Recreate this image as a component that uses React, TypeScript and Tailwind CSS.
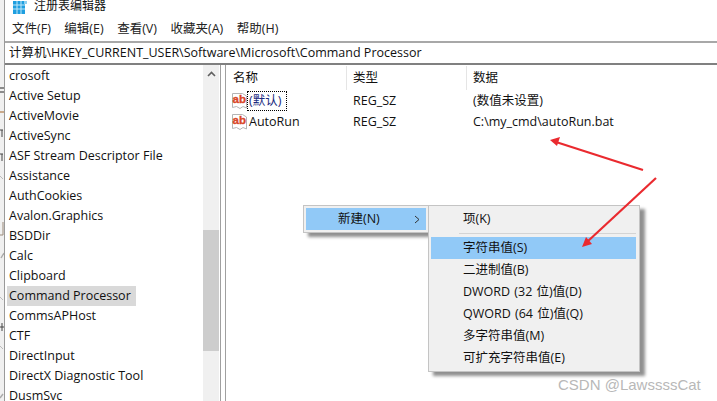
const font = { fontFamily: '"Open Sans", "Noto Sans CJK SC", sans-serif' };

const treeItems = [
  "crosoft", "Active Setup", "ActiveMovie", "ActiveSync", "ASF Stream Descriptor File", "Assistance",
  "AuthCookies", "Avalon.Graphics", "BSDDir", "Calc", "Clipboard", "Command Processor", "CommsAPHost",
  "CTF", "DirectInput", "DirectX Diagnostic Tool", "DusmSvc",
];

const menuItems = ["文件(F)", "编辑(E)", "查看(V)", "收藏夹(A)", "帮助(H)"];
const subItems = ["字符串值(S)", "二进制值(B)", "DWORD (32 位)值(D)", "QWORD (64 位)值(Q)", "多字符串值(M)", "可扩充字符串值(E)"];

function AbIcon() {
  return (
    <svg width="16" height="16" viewBox="0 0 16 16" className="shrink-0">
      <path d="M1.5 0.5 L11.5 0.5 L15.5 3 L15.5 15 L12 13.5 L9 15.5 L5.5 13.5 L1.5 14.5 Z" fill="#fff" stroke="#b4b4b4" />
      <text x="1.5" y="10" fontSize="11.5" fontWeight="700" fill="#d9482a" stroke="#d9482a" strokeWidth="0.35" fontFamily="Liberation Sans, sans-serif">ab</text>
    </svg>
  );
}

function AppIcon() {
  return (
    <svg width="14" height="13" viewBox="0 0 14 13">
      <rect x="0" y="0" width="12" height="13" fill="#1f9fe0" />
      <path d="M4 0V13M8 0V13M0 4H12M0 8H12" stroke="#bfe6f8" strokeWidth="1" />
      <path d="M11 0H14V3H11Z" fill="#8fd0ef" />
    </svg>
  );
}

function Sliver() {
  return (
    <svg width="4" height="401" viewBox="0 0 4 401" className="block">
      <path d="M0 88H4M0 92H4" stroke="#6a6a6a" strokeWidth="1.4" />
      <path d="M0 112H4" stroke="#c9a98a" strokeWidth="2" />
      <path d="M0 130H3M2 130V137" stroke="#444" strokeWidth="1" />
      <path d="M0 154H3M2 154V161" stroke="#444" strokeWidth="1" />
      <path d="M0 176L3 179" stroke="#bbb" strokeWidth="1" />
      <path d="M3 222V235H0" stroke="#9a8a7a" strokeWidth="1" fill="none" />
      <path d="M1 258L4 253" stroke="#aaa" strokeWidth="1.4" />
      <path d="M0 297L3 300" stroke="#bbb" strokeWidth="1" />
      <path d="M0 327H4M2 323V331" stroke="#444" strokeWidth="1" />
      <path d="M0 346L3 349" stroke="#bbb" strokeWidth="1" />
      <path d="M0 398L3 394" stroke="#aaa" strokeWidth="1.4" />
    </svg>
  );
}

export default function App() {
  return (
    <div className="relative flex h-[401px] w-[717px] overflow-hidden bg-white text-[12.5px] text-[#111]" style={font}>
      <div className="w-[5px] shrink-0 border-r border-[#9a9a9a] bg-[#f0f0f0]">
        <Sliver />
      </div>
      <div className="flex min-w-0 flex-1 flex-col">
        <div className="flex h-[14px] items-center gap-[7px] pl-[8px]">
          <AppIcon />
          <span className="-mt-[2px] text-[12px] leading-[14px]">注册表编辑器</span>
        </div>
        <div className="flex h-[27px] items-end gap-[13.5px] pb-[2px] pl-[7px] leading-[20px]">
          {menuItems.map((m) => (
            <span key={m} className="text-[#222]">{m}</span>
          ))}
        </div>
        <div className="flex h-[24px] items-center border-y-2 border-t-[#a8a8a8] border-b-[#808080] pl-[4px]">
          计算机\HKEY_CURRENT_USER\Software\Microsoft\Command Processor
        </div>
        <div className="flex min-h-0 flex-1">
          <div className="flex w-[215px] shrink-0 overflow-hidden pl-[2px] pr-px">
            <div className="flex w-[196px] shrink-0 flex-col pt-[1px]">
              {treeItems.map((t) => (
                <div key={t} className="flex h-[20px] shrink-0 items-center">
                  <span className={t === "Command Processor" ? "flex h-[20px] items-center whitespace-nowrap bg-[#d9d9d9] pl-[2px] pr-[5px]" : "whitespace-nowrap pl-[2px]"}>
                    {t}
                  </span>
                </div>
              ))}
            </div>
            <div className="flex w-[16px] shrink-0 flex-col bg-[#f0f0f0]">
              <div className="flex h-[17px] items-center justify-center">
                <svg width="9" height="6" viewBox="0 0 9 6">
                  <path d="M1 5L4.5 1.5L8 5" fill="none" stroke="#606060" strokeWidth="1.6" />
                </svg>
              </div>
              <div className="mt-[148px] h-[121px] bg-[#cdcdcd]" />
            </div>
          </div>
          <div className="w-[6px] shrink-0 border-x border-l-[#a0a0a0] border-r-[#a0a0a0]" />
          <div className="flex min-w-0 flex-1 flex-col">
            <div className="flex h-[26px] items-center">
              <div className="flex h-[24px] w-[121px] items-center border-r border-[#e5e5e5] pl-[7px]">名称</div>
              <div className="flex h-[24px] w-[120px] items-center border-r border-[#e5e5e5] pl-[6px]">类型</div>
              <div className="flex h-[24px] items-center pl-[6px]">数据</div>
            </div>
            <div className="flex h-[20px] items-center">
              <div className="flex w-[121px] items-center pl-[5px]">
                <AbIcon />
                <span className="flex h-[20px] w-[40px] items-center border border-dotted border-black pl-px text-[#1a2a80]">(默认)</span>
              </div>
              <div className="w-[120px] pl-[6px]">REG_SZ</div>
              <div className="pl-[6px]">(数值未设置)</div>
            </div>
            <div className="mt-[1px] flex h-[20px] items-center">
              <div className="flex w-[121px] items-center gap-[2px] pl-[5px]">
                <AbIcon />
                <span>AutoRun</span>
              </div>
              <div className="w-[120px] pl-[6px]">REG_SZ</div>
              <div className="pl-[6px]">C:\my_cmd\autoRun.bat</div>
            </div>
          </div>
        </div>
      </div>

      <div className="absolute left-[303px] top-[205px] flex h-[28px] w-[126px] items-center border border-[#c4c4c4] bg-[#f0f0f0] p-[2px] shadow-[5px_4px_3px_#909090]">
        <div className="flex h-[22px] w-full items-center justify-between bg-[#91c9f7] pl-[32px] pr-[6px]">
          <span>新建(N)</span>
          <svg width="6" height="9" viewBox="0 0 6 9"><path d="M1 1L5 4.5L1 8" fill="none" stroke="#333" strokeWidth="1" /></svg>
        </div>
      </div>

      <div className="absolute left-[428px] top-[205px] flex h-[167px] w-[212px] flex-col border border-[#c4c4c4] bg-[#f0f0f0] py-[2px] pl-[2px] pr-[3px] shadow-[5px_4px_3px_#909090] [word-spacing:1px]">
        <div className="flex h-[22px] items-center pl-[32px]">项(K)</div>
        <div className="my-[3px] ml-[28px] h-px bg-[#d4d4d4]" />
        {subItems.map((s, i) => (
          <div key={s} className={i === 0 ? "flex h-[22px] items-center bg-[#91c9f7] pl-[32px]" : "flex h-[22px] items-center pl-[32px]"}>
            {s}
          </div>
        ))}
      </div>

      <svg className="pointer-events-none absolute left-0 top-0" width="717" height="401" viewBox="0 0 717 401">
        <path d="M643 170L556 142" stroke="#ea2a2f" strokeWidth="2.2" />
        <path d="M550 140L560 137L557 146Z" fill="#ea2a2f" />
        <path d="M656 178L587 242" stroke="#ea2a2f" strokeWidth="2.2" />
        <path d="M582 247L586 237L592 244Z" fill="#ea2a2f" />
      </svg>

      <span className="absolute left-[558px] top-[377px] text-[15px] leading-[16px] text-[#b8b8b8]" style={{ fontFamily: '"Liberation Sans", sans-serif' }}>
        CSDN @LawssssCat
      </span>
    </div>
  );
}
